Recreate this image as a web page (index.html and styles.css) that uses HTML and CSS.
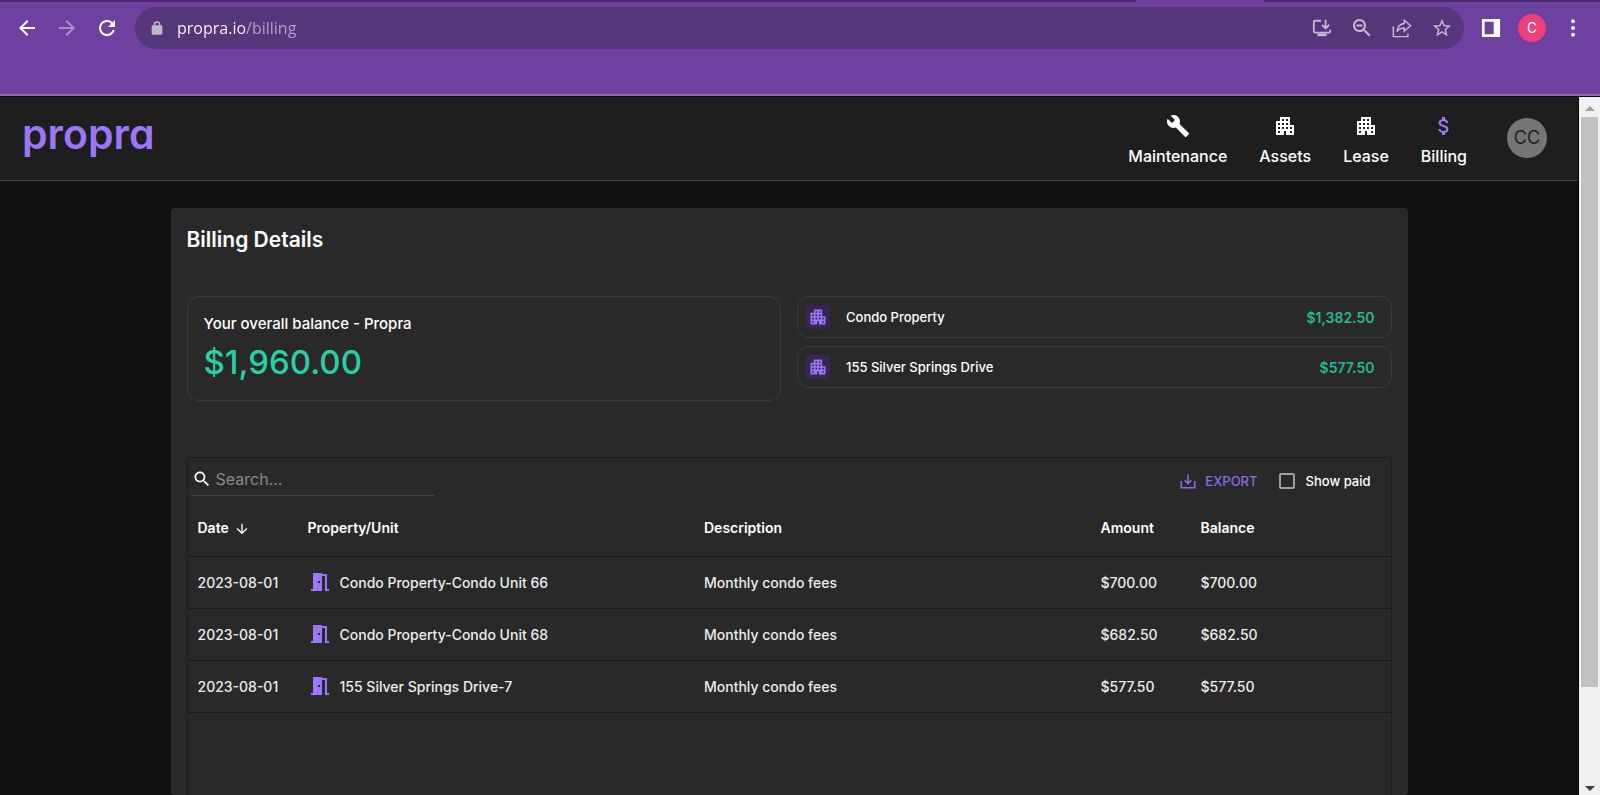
FILE: index.html
```html
<!DOCTYPE html>
<html lang="en">
<head>
    <meta charset="UTF-8">
    <meta name="viewport" content="width=device-width, initial-scale=1.0">
    <title>Propra - Billing</title>
    <link rel="stylesheet" href="styles.css">
</head>
<body>
    <!-- shared icons -->
    <svg class="sprite" aria-hidden="true">
        <symbol id="building" viewBox="0 0 24 24">
            <path d="M17 11V3H7v4H3v14h8v-4h2v4h8V11h-4zM7 19H5v-2h2v2zm0-4H5v-2h2v2zm0-4H5V9h2v2zm4 4H9v-2h2v2zm0-4H9V9h2v2zm0-4H9V5h2v2zm4 8h-2v-2h2v2zm0-4h-2V9h2v2zm0-4h-2V5h2v2zm4 12h-2v-2h2v2zm0-4h-2v-2h2v2z"/>
        </symbol>
        <symbol id="door" viewBox="0 0 24 24">
            <path fill-rule="evenodd" d="M3 21v-2h2V3h9v1h5v15h2v2h-4V6h-3v15H3zm7-10v2h2v-2h-2z"/>
        </symbol>
        <symbol id="search" viewBox="0 0 24 24">
            <path d="M15.500 14h-.79l-.28-.27C15.410 12.590 16 11.110 16 9.500 16 5.910 13.090 3 9.500 3S3 5.910 3 9.500 5.910 16 9.500 16c1.610 0 3.090-.59 4.230-1.570l.27.28v.79l5 4.990L20.490 19l-4.990-5zm-6 0C7.010 14 5 11.990 5 9.500S7.010 5 9.500 5 14 7.010 14 9.500 11.990 14 9.500 14z"/>
        </symbol>
    </svg>

    <div class="browser-bar">
        <div class="tab-strip"><span></span><span></span></div>
        <div class="toolbar">
            <div class="history">
                <button type="button" aria-label="Back"><svg viewBox="0 0 24 24"><path d="M20 11H7.830l5.590-5.590L12 4l-8 8 8 8 1.410-1.410L7.830 13H20v-2z"/></svg></button>
                <button type="button" aria-label="Forward" class="dim"><svg viewBox="0 0 24 24"><path d="M12 4l-1.410 1.410L16.170 11H4v2h12.170l-5.580 5.590L12 20l8-8z"/></svg></button>
                <button type="button" aria-label="Reload"><svg viewBox="0 0 24 24"><path d="M17.650 6.350A7.960 7.960 0 0 0 12 4a8 8 0 1 0 7.730 10h-2.080A6 6 0 1 1 12 6c1.660 0 3.140.69 4.220 1.780L13 11h7V4l-2.350 2.350z"/></svg></button>
            </div>
            <div class="address">
                <svg class="lock" viewBox="0 0 24 24"><path d="M18 8h-1V7A5 5 0 0 0 7 7v1H6a2 2 0 0 0-2 2v10a2 2 0 0 0 2 2h12a2 2 0 0 0 2-2V10a2 2 0 0 0-2-2zM9 8V7a3 3 0 0 1 6 0v1H9z"/></svg>
                <input type="text" class="url" aria-label="Address" value="propra.io/billing">
                <div class="address-actions">
                    <button type="button" aria-label="Install app"><svg viewBox="1 1 22 22"><path class="line" d="M11 4H4.500A1.500 1.500 0 0 0 3 5.500v10A1.500 1.500 0 0 0 4.500 17h15a1.500 1.500 0 0 0 1.500-1.500V14M16 3v9M12 8.500l4 4 4-4"/><path d="M7 18h10v3H7z"/></svg></button>
                    <button type="button" aria-label="Zoom"><svg viewBox="2 2 20 20"><use href="#search" width="24" height="24"/><path d="M6.500 8.500h6v2h-6z"/></svg></button>
                    <button type="button" aria-label="Share"><svg viewBox="1 1 22 22"><path class="line thin" d="M2.500 10v11.500h16V18M14.500 3.500l7 6-7 6V12c-4 0-6 1-8 4 .5-5 3-8.500 8-9z"/></svg></button>
                    <button type="button" aria-label="Bookmark"><svg viewBox="1 1 22 22"><path d="M22 9.240l-7.190-.62L12 2 9.190 8.630 2 9.240l5.460 4.730L5.820 21 12 17.270 18.180 21l-1.630-7.030L22 9.240zM12 15.400l-3.760 2.270 1-4.280-3.320-2.880 4.380-.38L12 6.100l1.710 4.040 4.380.38-3.320 2.880 1 4.280L12 15.400z"/></svg></button>
                </div>
            </div>
            <div class="window-actions">
                <button type="button" aria-label="Side panel"><svg viewBox="1 1 22 22"><path fill-rule="evenodd" d="M2 2h20v20H2zM5 5v14h10V5z"/></svg></button>
                <button type="button" class="profile">C</button>
                <button type="button" aria-label="Menu"><svg viewBox="0 0 24 24"><circle cx="12" cy="4" r="2.400"/><circle cx="12" cy="12" r="2.400"/><circle cx="12" cy="20" r="2.400"/></svg></button>
            </div>
        </div>
    </div>

    <div class="viewport">
        <div class="page">
            <header class="header">
                <a href="#" class="logo">propra</a>
                <nav class="nav">
                    <a href="#" class="nav-link"><svg viewBox="0 0 24 24"><path d="M22.700 19l-9.100-9.100c.9-2.300.4-5-1.500-6.900-2-2-5-2.400-7.400-1.300L9 6 6 9 1.600 4.700C.4 7.100.9 10.100 2.900 12.100c1.900 1.900 4.600 2.400 6.900 1.500l9.100 9.100c.4.4 1 .4 1.400 0l2.300-2.300c.5-.4.5-1.100.1-1.400z"/></svg>Maintenance</a>
                    <a href="#" class="nav-link"><svg><use href="#building"/></svg>Assets</a>
                    <a href="#" class="nav-link"><svg><use href="#building"/></svg>Lease</a>
                    <a href="#" class="nav-link active"><svg viewBox="0 0 24 24"><path d="M11.800 10.900c-2.270-.59-3-1.200-3-2.150 0-1.090 1.010-1.850 2.700-1.850 1.780 0 2.440.85 2.500 2.100h2.210c-.07-1.720-1.120-3.300-3.210-3.810V3h-3v2.160c-1.940.42-3.500 1.680-3.500 3.610 0 2.310 1.910 3.460 4.700 4.130 2.500.6 3 1.480 3 2.410 0 .69-.49 1.790-2.700 1.790-2.060 0-2.870-.92-2.980-2.100h-2.200c.12 2.190 1.760 3.420 3.680 3.830V21h3v-2.150c1.950-.37 3.500-1.500 3.500-3.550 0-2.840-2.430-3.810-4.700-4.400z"/></svg>Billing</a>
                    <button type="button" class="avatar">CC</button>
                </nav>
            </header>

            <main class="card">
                <h1>Billing Details</h1>

                <div class="summary">
                    <section class="balance">
                        <p>Your overall balance - Propra</p>
                        <strong>$1,960.00</strong>
                    </section>
                    <ul class="properties">
                        <li>
                            <span class="badge"><svg><use href="#building"/></svg></span>
                            <span class="name">Condo Property</span>
                            <span class="amount">$1,382.50</span>
                        </li>
                        <li>
                            <span class="badge"><svg><use href="#building"/></svg></span>
                            <span class="name">155 Silver Springs Drive</span>
                            <span class="amount">$577.50</span>
                        </li>
                    </ul>
                </div>

                <section class="charges">
                    <div class="charges-bar">
                        <label class="search">
                            <svg><use href="#search"/></svg>
                            <input type="text" placeholder="Search..." aria-label="Search">
                        </label>
                        <div class="options">
                            <button type="button" class="export"><svg viewBox="0 0 24 24"><path class="line" d="M3 12v9h18v-9M12 3v12M7.500 11l4.500 4.500 4.500-4.500"/></svg>EXPORT</button>
                            <input type="checkbox" id="showPaid">
                            <label for="showPaid">Show paid</label>
                        </div>
                    </div>
                    <table>
                        <thead>
                            <tr>
                                <th class="col-date">Date <svg viewBox="0 0 24 24"><path d="M20 12l-1.410-1.410L13 16.170V4h-2v12.170l-5.580-5.590L4 12l8 8 8-8z"/></svg></th>
                                <th>Property/Unit</th>
                                <th>Description</th>
                                <th class="col-amount">Amount</th>
                                <th class="col-balance">Balance</th>
                            </tr>
                        </thead>
                        <tbody>
                            <tr>
                                <td>2023-08-01</td>
                                <td><span class="unit"><svg><use href="#door"/></svg>Condo Property-Condo Unit 66</span></td>
                                <td>Monthly condo fees</td>
                                <td>$700.00</td>
                                <td>$700.00</td>
                            </tr>
                            <tr>
                                <td>2023-08-01</td>
                                <td><span class="unit"><svg><use href="#door"/></svg>Condo Property-Condo Unit 68</span></td>
                                <td>Monthly condo fees</td>
                                <td>$682.50</td>
                                <td>$682.50</td>
                            </tr>
                            <tr>
                                <td>2023-08-01</td>
                                <td><span class="unit"><svg><use href="#door"/></svg>155 Silver Springs Drive-7</span></td>
                                <td>Monthly condo fees</td>
                                <td>$577.50</td>
                                <td>$577.50</td>
                            </tr>
                        </tbody>
                    </table>
                </section>
            </main>
        </div>

        <div class="scrollbar">
            <svg class="up" viewBox="0 0 10 6"><path d="M0 6l5-5 5 5z"/></svg>
            <div class="track"><div class="thumb"></div></div>
            <svg class="down" viewBox="0 0 10 6"><path d="M0 0l5 5 5-5z"/></svg>
        </div>
    </div>
</body>
</html>
```
FILE: styles.css
```css
* {
    box-sizing: border-box;
}
body {
    margin: 0;
    height: 100vh;
    display: flex;
    flex-direction: column;
    overflow: hidden;
    background-color: #111111;
    color: #ffffff;
    font-family: Inter, "Liberation Sans", sans-serif;
    font-size: 14px;
    font-weight: 500;
}
button,
input {
    font: inherit;
    color: inherit;
    margin: 0;
    padding: 0;
    border: none;
    background: none;
}
button {
    cursor: pointer;
}
a {
    color: inherit;
    text-decoration: none;
}
svg {
    display: block;
    flex: none;
    fill: currentColor;
}
.line {
    fill: none;
    stroke: currentColor;
    stroke-width: 2;
}
.thin {
    stroke-width: 1.6;
}
.sprite {
    display: none;
}

/* browser toolbar */
.browser-bar {
    flex: none;
    height: 97px;
    background-color: #6e41a1;
    border-bottom: 1px solid #08060a;
    box-shadow: inset 0 -2px #8d69b5;
}
.tab-strip {
    display: flex;
    justify-content: space-between;
    height: 2px;
}
.tab-strip span {
    width: 71%;
    background-color: #4b2c70;
}
.tab-strip span:last-child {
    width: 21%;
}
.toolbar {
    display: flex;
    align-items: center;
    padding: 5px 15px 0;
}
.toolbar button,
.toolbar svg {
    width: 24px;
    height: 24px;
}
.history {
    display: flex;
    gap: 16px;
    margin-right: 16px;
}
.history .dim {
    color: #ab8fcb;
}
.address {
    flex: 1;
    display: flex;
    align-items: center;
    height: 42px;
    padding: 0 10px 0 14px;
    border-radius: 21px;
    background-color: #56367a;
}
.toolbar .lock {
    width: 16px;
    height: 16px;
    margin-right: 12px;
    color: #bdb9c4;
}
.url {
    flex: 1;
    font-family: "Open Sans", "Noto Sans", sans-serif;
    font-size: 16px;
    font-weight: 500;
    color: transparent;
    /* host is bright, the path is dimmed */
    background: linear-gradient(to right, #ffffff 69px, #b7a3cc 69px);
    -webkit-background-clip: text;
    background-clip: text;
}
.address-actions {
    display: flex;
    gap: 16px;
    color: #c5bacf;
}
.address-actions svg {
    padding: 2px;
}
.window-actions {
    display: flex;
    align-items: center;
    gap: 15px;
    margin-left: 15px;
}
.window-actions svg {
    padding: 2px;
}
.toolbar .profile {
    width: 28px;
    height: 28px;
    border-radius: 50%;
    background-color: #ee4078;
    font-family: Roboto, sans-serif;
    font-size: 15px;
    font-weight: 400;
}

/* app */
.viewport {
    flex: 1;
    min-height: 0;
    display: flex;
}
.page {
    flex: 1;
    overflow: hidden;
    display: flex;
    flex-direction: column;
    border-right: 1px solid #000000;
}
.header {
    flex: none;
    display: flex;
    align-items: center;
    justify-content: space-between;
    height: 84px;
    padding: 0 31px 0 22px;
    background-color: #1e1e1e;
    border-bottom: 1px solid #414141;
}
.logo {
    color: #9c76f7;
    font-size: 41px;
    line-height: 40px;
    font-weight: 600;
    font-feature-settings: "cv11";
    padding-bottom: 10px;
}
.nav {
    display: flex;
    align-items: center;
    gap: 32px;
}
.nav-link {
    display: flex;
    flex-direction: column;
    align-items: center;
    gap: 6px;
    padding-top: 4px;
    font-size: 16px;
    line-height: 24px;
}
.nav-link svg {
    width: 24px;
    height: 24px;
}
.nav-link.active svg {
    color: #9c76f7;
}
.avatar {
    width: 40px;
    height: 40px;
    margin: 0 0 2px 8px;
    border-radius: 50%;
    background-color: #757575;
    color: #1e1e1e;
    font-size: 18px;
    font-weight: 400;
}
.card {
    flex: 1 0 auto;
    display: flex;
    flex-direction: column;
    width: 1237px;
    max-width: 90%;
    margin: 27px auto 0;
    padding: 16px 16px 0;
    border-radius: 4px;
    background-color: #292929;
}
h1 {
    margin: 0 0 40px;
    font-size: 21px;
    line-height: 32px;
    font-weight: 600;
}
.summary {
    display: grid;
    grid-template-columns: 1fr 1fr;
    align-items: start;
    gap: 16px;
    margin-bottom: 56px;
}
.balance,
.properties li {
    border: 1px solid #3a3a3a;
    border-radius: 12px;
}
.balance {
    padding: 15px 16px 12px;
}
.balance p {
    margin: 0;
    font-size: 15px;
    line-height: 24px;
}
.balance strong {
    display: block;
    color: #2bcfa6;
    font-size: 33px;
    line-height: 52px;
    font-weight: 500;
}
.properties {
    display: grid;
    gap: 8px;
    margin: 0;
    padding: 0;
    list-style: none;
}
.properties li {
    display: flex;
    align-items: center;
    height: 42px;
    padding: 0 16px 0 8px;
}
.badge {
    padding: 2px;
    border-radius: 3px;
    background-color: #35274f;
    color: #9c76f7;
}
.badge svg {
    width: 20px;
    height: 20px;
}
.name {
    flex: 1;
    margin-left: 16px;
    font-size: 13px;
}
.amount {
    color: #27b895;
    font-weight: 600;
}

/* charges table */
.charges {
    flex: 1;
    border: 1px solid #1d1d1d;
    border-bottom: none;
    border-radius: 4px 4px 0 0;
}
.charges-bar {
    display: flex;
    justify-content: space-between;
    padding: 4px 20px 4px 3px;
}
.search {
    display: flex;
    align-items: center;
    gap: 4px;
    width: 243px;
    height: 34px;
    padding-left: 1px;
    border-bottom: 1px solid #454545;
}
.search svg {
    width: 20px;
    height: 20px;
}
.search input {
    flex: 1;
    min-width: 0;
    font-size: 16px;
    font-weight: 400;
}
.search input::placeholder {
    color: #8a8a8a;
}
.options {
    display: flex;
    align-items: center;
    height: 38px;
    font-size: 13px;
}
.export {
    display: flex;
    align-items: center;
    gap: 8px;
    margin-right: 21px;
    color: #8e6be0;
}
.export svg {
    width: 18px;
    height: 18px;
}
#showPaid {
    appearance: none;
    width: 16px;
    height: 16px;
    margin-right: 11px;
    border: 2px solid #a0a0a0;
    border-radius: 2px;
}
table {
    width: 100%;
    table-layout: fixed;
    border-collapse: collapse;
}
th,
td {
    height: 52px;
    padding: 0 10px;
    border-bottom: 1px solid #1a1a1a;
    text-align: left;
    color: #ececec;
}
th {
    padding-bottom: 4px;
    color: #ffffff;
    font-weight: 600;
}
th svg {
    display: inline-block;
    width: 16px;
    height: 16px;
    margin-left: 2px;
    vertical-align: -4px;
}
.col-date {
    width: 110px;
}
.col-amount {
    width: 100px;
}
.col-balance {
    width: 200px;
}
.unit {
    display: flex;
    align-items: center;
    gap: 8px;
}
.unit svg {
    width: 24px;
    height: 24px;
    color: #9c76f7;
}

/* scrollbar */
.scrollbar {
    flex: none;
    display: flex;
    flex-direction: column;
    align-items: center;
    width: 21px;
    padding: 8px 2px 3px;
    background-color: #f1f1f1;
}
.scrollbar svg {
    width: 10px;
    height: 6px;
}
.up {
    color: #a0a0a0;
}
.down {
    color: #404040;
}
.track {
    flex: 1;
    width: 100%;
    padding: 6px 0;
}
.thumb {
    height: 86%;
    background-color: #c1c1c1;
}
```
